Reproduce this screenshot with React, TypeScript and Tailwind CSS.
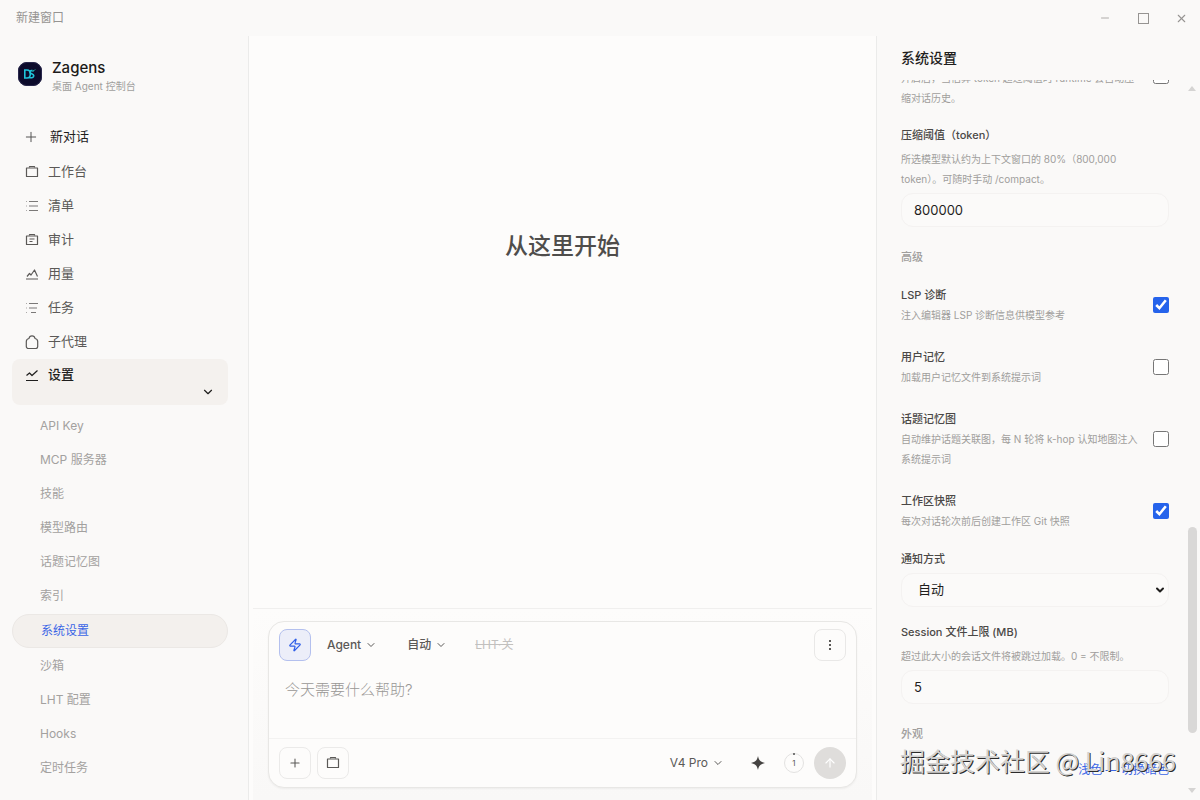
import type { ReactNode } from "react";
import { ArrowUp, ChevronDown, Minus, Plus, X, Zap } from "lucide-react";

type IconName = "briefcase" | "list" | "audit" | "usage" | "tasks" | "bag" | "trend";

const iconPaths: Record<IconName, ReactNode> = {
  briefcase: (
    <>
      <path d="M1.5 3h11v8.5h-11z" />
      <path d="M4.5 2.5v-1h5v1" />
    </>
  ),
  list: (
    <>
      <path d="M4 2.5h9M4 7h9M4 11.5h9" opacity="0.8" />
      <path d="M1 2.5h1M1 7h1M1 11.5h1" opacity="0.5" />
    </>
  ),
  audit: (
    <>
      <path d="M1.5 3h11v8.5h-11z" />
      <path d="M4.5 2.5v-1h5v1M4.5 6h5M4.5 8.5h3" />
    </>
  ),
  usage: <path d="M1 12h12M2 9.5l2.5-3L6 8l3.5-5L12.5 9.5" />,
  tasks: (
    <>
      <path d="M4 2.5h9M4 7h8M6 11.5h5" opacity="0.8" />
      <path d="M1 2.5h1M1 7h1M1 11.5h1" opacity="0.5" />
    </>
  ),
  bag: <path d="M4 3.5C4.300 1.700 5.400.8 7 .8s2.700.9 3 2.700c1.800.3 2.700 1.200 2.700 3v5a2 2 0 0 1-2 2H3.300a2 2 0 0 1-2-2v-5c0-1.800.9-2.700 2.700-3z" />,
  trend: <path d="M1 12.500h12M1.500 7.500l3-2.500 2.500 2.500 5.500-5" />,
};

const NavIcon = ({ name }: { name: IconName }) => (
  <svg viewBox="0 0 14 14" className="h-3.5 w-3.5 shrink-0" fill="none" stroke="currentColor" strokeWidth="1.2" strokeLinejoin="round">
    {iconPaths[name]}
  </svg>
);

const navItems: { label: string; icon: IconName }[] = [
  { label: "工作台", icon: "briefcase" },
  { label: "清单", icon: "list" },
  { label: "审计", icon: "audit" },
  { label: "用量", icon: "usage" },
  { label: "任务", icon: "tasks" },
  { label: "子代理", icon: "bag" },
];

const subItems = [
  "API Key",
  "MCP 服务器",
  "技能",
  "模型路由",
  "话题记忆图",
  "索引",
  "系统设置",
  "沙箱",
  "LHT 配置",
  "Hooks",
  "定时任务",
];

const Logo = () => (
  <svg viewBox="0 0 24 24" className="h-6 w-6 shrink-0">
    <rect width="24" height="24" rx="9" fill="#0c0b2b" />
    <rect x="0.5" y="0.5" width="23" height="23" rx="8.5" fill="none" stroke="#29284c" />
    <path d="M6.800 8h2.200c2.300 0 3.300 1.500 3.300 4s-1 4-3.300 4H6.800z" fill="none" stroke="#1fc4da" strokeWidth="1.6" />
    <path d="M15.800 9.200c-1-.8-4-1-4 .7 0 2 4 1.600 4 3.800 0 2.400-3.300 2.500-5 1.500" fill="none" stroke="#1fc4da" strokeWidth="1.6" />
    <path d="M14 8.500l1.500 1 2-2.500" fill="none" stroke="#16706e" />
  </svg>
);

const TitleBar = () => (
  <header className="flex h-9 shrink-0 items-center justify-between px-4 text-xs text-[#969492]">
    <span>新建窗口</span>
    <div className="flex items-center gap-6">
      <button aria-label="最小化" className="flex w-3.5 justify-center"><Minus size={12} strokeWidth={1.5} /></button>
      <button aria-label="最大化" className="flex w-3.5 justify-center">
        <span className="h-[11px] w-[11px] border border-current" />
      </button>
      <button aria-label="关闭" className="-mr-1 flex w-3.5 justify-center"><X size={13} strokeWidth={2} /></button>
    </div>
  </header>
);

const Sidebar = () => (
  <aside className="flex w-[249px] shrink-0 flex-col overflow-hidden border-r border-[#ebebea] pr-5 pl-3">
    <div className="flex items-center gap-2.5 px-1.5 pt-5">
      <Logo />
      <div>
        <div className="text-[15px] leading-6 font-medium text-[#1c1b1a]">Zagens</div>
        <div className="text-[10px] leading-3 text-[#a19f9d]">桌面 Agent 控制台</div>
      </div>
    </div>
    <nav className="pt-[27px] text-[13px]">
      <button className="flex h-9 w-full items-center gap-[11px] px-[11px] text-[#1f1e1d]">
        <Plus size={16} strokeWidth={1.5} className="text-[#555]" />
        新对话
      </button>
      {navItems.map((item) => (
        <button key={item.label} className="flex h-[34px] w-full items-center gap-[9px] px-[13px] text-[#5b5957]">
          <NavIcon name={item.icon} />
          {item.label}
        </button>
      ))}
      <button className="flex h-[46px] w-full flex-col rounded-lg bg-[#f4f1ee] px-[13px] text-[#1f1e1d]">
        <span className="flex h-8 items-center gap-[9px] font-medium">
          <NavIcon name="trend" />
          设置
        </span>
        <ChevronDown size={14} strokeWidth={2} className="-mt-1.5 self-end" />
      </button>
    </nav>
    <div className="pt-1 text-xs text-[#a3a19f]">
      {subItems.map((label) =>
        label === "系统设置" ? (
          <button key={label} aria-current="page" className="my-px flex h-[34px] w-full items-center rounded-[17px] border border-[#ebe8e5] bg-[#f3f0ed] px-7 text-[#3b66e6]">
            {label}
          </button>
        ) : (
          <button key={label} className="flex h-[34px] w-full items-center px-7">{label}</button>
        ),
      )}
    </div>
  </aside>
);

const Composer = () => (
  <div className="mx-1 border-t border-[#f0efee] bg-linear-to-b from-[#fdfcfb] to-[#f9f8f7] px-[15px] pt-3 pb-3">
    <div className="rounded-2xl border border-[#e8e7e5] bg-[#fdfcfb] shadow-xs">
      <div className="flex h-[46px] items-center px-2.5 text-xs font-medium text-[#5b5957]">
        <button aria-label="快速模式" className="flex h-8 w-8 items-center justify-center rounded-lg border border-[#b4c0ee] bg-[#eceef9] text-[#2f5fe8]">
          <Zap size={14} strokeWidth={2} />
        </button>
        <button className="ml-4 flex items-center gap-1">Agent <ChevronDown size={12} /></button>
        <button className="ml-[30px] flex items-center gap-1">自动 <ChevronDown size={12} /></button>
        <button className="ml-7 font-normal text-[#c2c0be] line-through">LHT·关</button>
        <button aria-label="更多" className="ml-auto flex h-8 w-8 items-center justify-center rounded-lg border border-[#e9e8e7]">
          <svg viewBox="0 0 12 12" className="h-3 w-3" fill="currentColor">
            <path d="M5 1h2v2H5zM5 5h2v2H5zM5 9h2v2H5z" />
          </svg>
        </button>
      </div>
      <textarea
        aria-label="消息"
        placeholder="今天需要什么帮助?"
        className="block h-[70px] w-full resize-none px-4 pt-2.5 text-[15px] leading-6 font-light outline-none placeholder:text-[#999795]"
      />
      <div className="flex h-[49px] items-center gap-1.5 border-t border-[#f3f2f1] px-2.5 text-[#5b5957]">
        <button aria-label="添加" className="flex h-8 w-8 items-center justify-center rounded-lg border border-[#ebeae9]">
          <Plus size={14} strokeWidth={1.8} />
        </button>
        <button aria-label="工作区" className="flex h-8 w-8 items-center justify-center rounded-lg border border-[#ebeae9]">
          <NavIcon name="briefcase" />
        </button>
        <button className="ml-auto flex items-center gap-1 text-xs">V4 Pro <ChevronDown size={12} /></button>
        <button aria-label="智能" className="ml-5 flex h-4 w-4 items-center justify-center text-[#454341]">
          <svg viewBox="0 0 16 16" className="h-4 w-4" fill="currentColor">
            <path d="M8 1c1 4.500 2.500 6 7 7-4.500 1-6 2.500-7 7-1-4.500-2.500-6-7-7 4.500-1 6-2.500 7-7z" />
          </svg>
        </button>
        <div className="relative ml-3 flex h-5 w-5 items-center justify-center rounded-full border border-[#e3e2e1] text-[8px]">
          1
          <span className="absolute -top-px h-0.5 w-0.5 bg-[#777]" />
        </div>
        <button aria-label="发送" className="ml-1 flex h-8 w-8 items-center justify-center rounded-full bg-[#dfdddb] text-white">
          <ArrowUp size={14} strokeWidth={2} />
        </button>
      </div>
    </div>
  </div>
);

const CheckRow = ({ id, label, hint, checked }: { id: string; label: string; hint: string; checked?: boolean }) => (
  <div className="flex items-center justify-between gap-3">
    <label htmlFor={id} className="block">
      <span className="block text-[11px] leading-5 font-medium text-[#4a4846]">{label}</span>
      <span className="block text-[10px] leading-5 text-[#a09e9c]">{hint}</span>
    </label>
    <input id={id} type="checkbox" defaultChecked={checked} className="h-4 w-4 shrink-0 accent-[#2563eb]" />
  </div>
);

const fieldClass = "block h-[34px] w-full rounded-xl border border-[#f4f2f1] bg-[#fbfaf9] px-3 text-[13px] text-[#1f1e1d]";
const labelClass = "block text-[11px] leading-5 font-medium text-[#4a4846]";
const hintClass = "text-[10px] leading-5 text-[#a09e9c]";
const sectionClass = "text-[11px] leading-5 font-medium text-[#a09e9c]";

const SettingsPanel = () => (
  <aside className="relative flex w-[324px] shrink-0 flex-col border-l border-[#ebebea]">
    <h2 className="h-11 shrink-0 px-6 pt-3 text-sm leading-5 font-medium text-[#1f1e1d]">系统设置</h2>
    <div className="flex min-h-0 grow">
      <div className="flex min-w-0 grow flex-col justify-end overflow-hidden pr-[15px] pl-6">
        <div className="flex items-start justify-between gap-3">
          <label htmlFor="compact" className={hintClass}>
            开启后，当估算 token 超过阈值时 runtime 会自动压缩对话历史。
          </label>
          <input id="compact" type="checkbox" className="h-4 w-4 shrink-0" />
        </div>
        <div className="mt-[17px]">
          <label htmlFor="threshold" className={labelClass}>压缩阈值（token）</label>
          <p className={`${hintClass} mt-1 pr-8`}>所选模型默认约为上下文窗口的 80%（800,000 token）。可随时手动 /compact。</p>
          <input id="threshold" defaultValue="800000" className={`${fieldClass} mt-1`} />
        </div>
        <h3 className={`${sectionClass} mt-5`}>高级</h3>
        <div className="mt-[18px] flex flex-col gap-[22px]">
          <CheckRow id="lsp" label="LSP 诊断" hint="注入编辑器 LSP 诊断信息供模型参考" checked />
          <CheckRow id="memory" label="用户记忆" hint="加载用户记忆文件到系统提示词" />
          <CheckRow id="topic" label="话题记忆图" hint="自动维护话题关联图，每 N 轮将 k-hop 认知地图注入系统提示词" />
          <CheckRow id="snapshot" label="工作区快照" hint="每次对话轮次前后创建工作区 Git 快照" checked />
        </div>
        <div className="mt-[18px]">
          <label htmlFor="notify" className={labelClass}>通知方式</label>
          <div className="relative mt-1">
            <select id="notify" className={`${fieldClass} appearance-none pl-4`}>
              <option>自动</option>
            </select>
            <ChevronDown size={12} strokeWidth={4} className="pointer-events-none absolute top-[11px] right-[3px] text-[#1f1e1d]" />
          </div>
        </div>
        <div className="mt-[15px]">
          <label htmlFor="session" className={labelClass}>Session 文件上限 (MB)</label>
          <p className={`${hintClass} mt-1`}>超过此大小的会话文件将被跳过加载。0 = 不限制。</p>
          <input id="session" defaultValue="5" className={`${fieldClass} mt-1`} />
        </div>
        <h3 className={`${sectionClass} mt-5`}>外观</h3>
        <div className="flex h-14 shrink-0 justify-end pt-4">
          <button className="h-5 text-xs leading-5 text-[#3b66e6]">浅色 — 切换暗色</button>
        </div>
      </div>
      <div className="flex w-4 shrink-0 flex-col items-center pt-1.5 pr-0 pb-[7px]">
        <span className="border-x-4 border-b-[5px] border-x-transparent border-b-[#d5d4d3]" />
        <span className="grow" />
        <span className="h-[206px] w-[9px] rounded-full bg-[#d9d8d7]" />
        <span className="mt-[55px] border-x-4 border-t-[5px] border-x-transparent border-t-[#d5d4d3]" />
      </div>
    </div>
    <div className="pointer-events-none absolute right-6 bottom-6 font-['Noto_Sans_CJK_SC',sans-serif] text-[25px] leading-8 whitespace-nowrap text-[#d3d2d0] [text-shadow:1px_1px_0_#2b2b2b]">
      掘金技术社区 @ Lin8666
    </div>
  </aside>
);

export default function App() {
  return (
    <div className="flex h-screen flex-col overflow-hidden bg-[#faf9f8] font-[Inter,'Noto_Sans_CJK_SC',sans-serif]">
      <TitleBar />
      <div className="flex min-h-0 grow">
        <Sidebar />
        <main className="flex min-w-0 grow flex-col bg-[#fdfcfb]">
          <div className="flex min-h-0 grow justify-center pt-48">
            <h1 className="text-[23px] leading-9 font-medium text-[#4f4d4b]">从这里开始</h1>
          </div>
          <Composer />
        </main>
        <SettingsPanel />
      </div>
    </div>
  );
}
